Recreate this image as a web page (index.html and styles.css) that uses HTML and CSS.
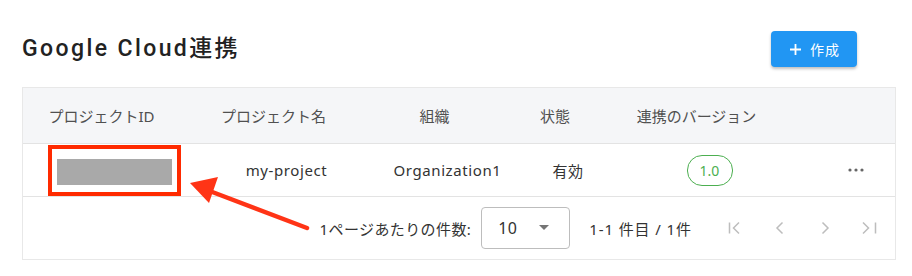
FILE: index.html
```html
<!DOCTYPE html>
<html lang="ja">
<head>
    <meta charset="UTF-8">
    <meta name="viewport" content="width=device-width, initial-scale=1.0">
    <title>Google Cloud連携</title>
    <link rel="stylesheet" href="styles.css">
</head>
<body>
    <div class="page">
        <div class="page-header">
            <h1>Google Cloud連携</h1>
            <button type="button" class="btn-create">
                <svg class="plus" width="11" height="11" viewBox="0 0 11 11"><path d="M5.5 0v11M0 5.5h11" stroke="#fff" stroke-width="1.8"/></svg>
                作成
            </button>
        </div>

        <div class="card">
            <div class="row head">
                <div class="cell c1"><span>プロジェクトID</span><i class="sort"></i></div>
                <div class="cell c2"><span>プロジェクト名</span><i class="sort"></i></div>
                <div class="cell c3"><span>組織</span><i class="sort"></i></div>
                <div class="cell c4"><span>状態</span><i class="sort"></i></div>
                <div class="cell c5"><span>連携のバージョン</span><i class="sort"></i></div>
                <div class="cell c6"></div>
            </div>
            <div class="row body">
                <div class="cell c1">
                    <div class="highlight"><div class="masked"></div></div>
                </div>
                <div class="cell c2">my-project</div>
                <div class="cell c3">Organization1</div>
                <div class="cell c4">有効</div>
                <div class="cell c5"><span class="badge">1.0</span></div>
                <div class="cell c6">
                    <svg width="16" height="4" viewBox="0 0 16 4"><circle cx="2" cy="2" r="1.6" fill="#666"/><circle cx="8" cy="2" r="1.6" fill="#666"/><circle cx="14" cy="2" r="1.6" fill="#666"/></svg>
                </div>
            </div>
            <div class="footer">
                <span class="per-page">1ページあたりの件数:</span>
                <div class="select">
                    <span>10</span>
                    <svg width="10" height="6" viewBox="0 0 10 6"><path d="M0 0h10L5 5z" fill="#757575"/></svg>
                </div>
                <span class="range">1-1 件目 / 1件</span>
                <div class="pager">
                    <button type="button"><svg width="16" height="16" viewBox="0 0 16 16"><path d="M2.5 2.5v11M12 2.5L6.5 8l5.5 5.5" fill="none" stroke="#bdbdbd" stroke-width="1.5"/></svg></button>
                    <button type="button"><svg width="16" height="16" viewBox="0 0 16 16"><path d="M10.5 2.5L5 8l5.5 5.5" fill="none" stroke="#bdbdbd" stroke-width="1.5"/></svg></button>
                    <button type="button"><svg width="16" height="16" viewBox="0 0 16 16"><path d="M5.5 2.5L11 8l-5.5 5.5" fill="none" stroke="#bdbdbd" stroke-width="1.5"/></svg></button>
                    <button type="button"><svg width="18" height="16" viewBox="0 0 18 16"><path d="M2 2.5L7.5 8 2 13.5M14.5 2.5v11" fill="none" stroke="#bdbdbd" stroke-width="1.5"/></svg></button>
                </div>
            </div>

            <!-- annotation arrow -->
            <svg class="annotation" width="873" height="172" viewBox="0 0 873 172">
                <line x1="285" y1="141" x2="185" y2="103" stroke="#ff3416" stroke-width="4.5" stroke-linecap="round"/>
                <path d="M168 96L196 90L187 116Z" fill="#ff3416"/>
            </svg>
        </div>
    </div>
</body>
</html>
```

FILE: styles.css
```css
body {
    margin: 0;
    background-color: #fff;
    font-family: 'Noto Sans', 'Noto Sans CJK JP', sans-serif;
    color: #333;
}
.page {
    padding: 0 16px 0 22px;
}
.page-header {
    display: flex;
    align-items: center;
    justify-content: space-between;
    padding-top: 31px;
    margin-bottom: 20px;
}
h1 {
    margin: 0;
    font-family: Roboto, 'Noto Sans CJK JP', sans-serif;
    font-size: 23px;
    font-weight: 500;
    letter-spacing: 2.4px;
    color: #222;
    line-height: 36px;
}
.btn-create {
    width: 86px;
    height: 36px;
    margin-right: 39px;
    background-color: #2196f3;
    color: #fff;
    border: none;
    border-radius: 4px;
    font-family: 'Noto Sans CJK JP', sans-serif;
    font-size: 14px;
    letter-spacing: 1px;
    box-shadow: 0 2px 3px rgba(0,0,0,0.25);
    display: flex;
    align-items: center;
    justify-content: center;
    padding: 0 0 0 2px;
}
.btn-create .plus {
    margin-right: 9px;
}
.card {
    position: relative;
    border: 1px solid #e8e8e8;
}
.row {
    display: flex;
    border-bottom: 1px solid #e3e3e3;
}
.row.head {
    height: 55px;
    background-color: #f5f6f8;
    color: #505050;
}
.row.head .cell {
    letter-spacing: 0;
}
.row.body {
    height: 52px;
}
.cell {
    display: flex;
    align-items: center;
    justify-content: center;
    font-size: 15px;
    letter-spacing: 0.6px;
}
.sort {
    display: inline-block;
    width: 26px;
}
.c1 { width: 183px; }
.c2 { width: 161px; }
.c3 { width: 161px; }
.c4 { width: 80px; }
.c5 { width: 203px; }
.c6 { flex: 1; padding-left: 6px; }
.highlight {
    border: 4px solid #ff2a00;
    padding: 10px 5px 7px;
}
.masked {
    width: 115px;
    height: 26px;
    background-color: #a9a9a9;
}
.badge {
    display: inline-block;
    width: 44px;
    height: 29px;
    line-height: 29px;
    text-align: center;
    border: 1px solid #4caf50;
    border-radius: 15px;
    color: #4caf50;
    font-size: 14px;
    letter-spacing: 0;
}
.footer {
    height: 62px;
    display: flex;
    align-items: center;
    justify-content: flex-end;
    padding-right: 3px;
    font-size: 15px;
    letter-spacing: 0.4px;
}
.per-page {
    margin-right: 10px;
}
.select {
    width: 89px;
    height: 42px;
    border: 1px solid #bdbdbd;
    border-radius: 4px;
    display: flex;
    align-items: center;
    justify-content: space-between;
    padding: 0 20px 0 16px;
    box-sizing: border-box;
    font-size: 16px;
    margin-right: 19px;
}
.range {
    letter-spacing: 0.9px;
    margin-right: 20px;
}
.pager {
    display: flex;
}
.pager button {
    width: 45px;
    height: 40px;
    border: none;
    background: none;
    padding: 0;
    display: flex;
    align-items: center;
    justify-content: center;
}
.annotation {
    position: absolute;
    left: -1px;
    top: -1px;
    pointer-events: none;
}
```
